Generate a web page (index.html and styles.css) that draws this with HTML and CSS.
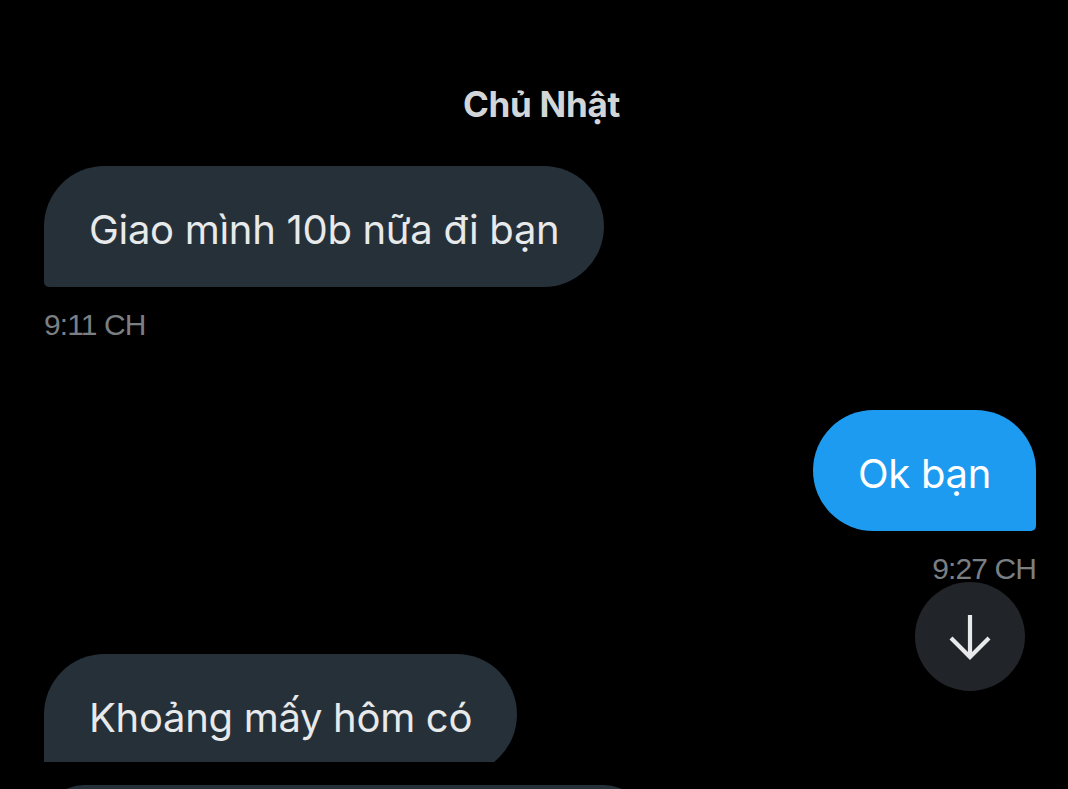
FILE: index.html
```html
<!DOCTYPE html>
<html lang="vi">
<head>
<meta charset="utf-8">
<link rel="stylesheet" href="styles.css">
</head>
<body>
<div class="screen">
  <div class="chat">
    <div class="day">Chủ Nhật</div>
    <div class="msg in">
      <div class="bubble">Giao mình 10b nữa đi bạn</div>
      <div class="time">9:11 CH</div>
    </div>
    <div class="msg out">
      <div class="bubble">Ok bạn</div>
      <div class="time">9:27 CH</div>
    </div>
    <div class="msg in">
      <div class="bubble">Khoảng mấy hôm có</div>
    </div>
  </div>
  <div class="next"></div>
  <button class="scroll-down" aria-label="Cuộn xuống">
    <svg width="44" height="48" viewBox="0 0 44 48" fill="none" stroke="#e7e9ea" stroke-width="4.2" stroke-linecap="butt" stroke-linejoin="miter">
      <path d="M22 2 V44"/>
      <path d="M3 25 L22 44 L41 25"/>
    </svg>
  </button>
</div>
</body>
</html>
```

FILE: styles.css
```css
* { box-sizing: border-box; }
html, body { margin: 0; padding: 0; background: #000; }
body { width: 1068px; height: 789px; overflow: hidden; font-family: Inter, "Noto Sans", sans-serif; }
.screen { position: relative; width: 1068px; height: 789px; overflow: hidden; background: #000; }
.chat {
  height: 762px;
  overflow: hidden;
  padding: 84px 32px 0 44px;
  display: flex;
  flex-direction: column;
}
.day {
  text-align: center;
  font-weight: 700;
  font-size: 35px;
  line-height: 40px;
  color: #d3d6d9;
  margin: 0 0 42px 3px;
  letter-spacing: -0.3px;
}
.msg { display: flex; flex-direction: column; margin-bottom: 68px; }
.msg.in { align-items: flex-start; }
.msg.out { align-items: flex-end; }
.bubble {
  font-size: 40px;
  line-height: 47px;
  padding: 40px 45px 34px;
  border-radius: 61px;
  color: #e7e9ea;
  background: #263039;
  white-space: nowrap;
  letter-spacing: -0.3px;
}
.msg.in .bubble { border-bottom-left-radius: 5px; }
.msg.out .bubble { border-bottom-right-radius: 5px; background: #1d9bf0; color: #fff; }
.time {
  margin-top: 21px;
  font-family: "Liberation Sans", Arial, sans-serif;
  font-size: 30px;
  line-height: 34px;
  letter-spacing: -0.9px;
  color: #7a7f84;
}
.next {
  height: 60px;
  margin: 23px 0 0 44px;
  width: 600px;
  border-radius: 40px 40px 0 0;
  background: #263039;
}
.scroll-down {
  position: absolute;
  left: 915px;
  top: 582px;
  width: 110px;
  height: 109px;
  border: 0;
  padding: 0;
  border-radius: 50%;
  background: #212428;
  display: flex;
  align-items: center;
  justify-content: center;
}
.scroll-down svg { display: block; }
```
